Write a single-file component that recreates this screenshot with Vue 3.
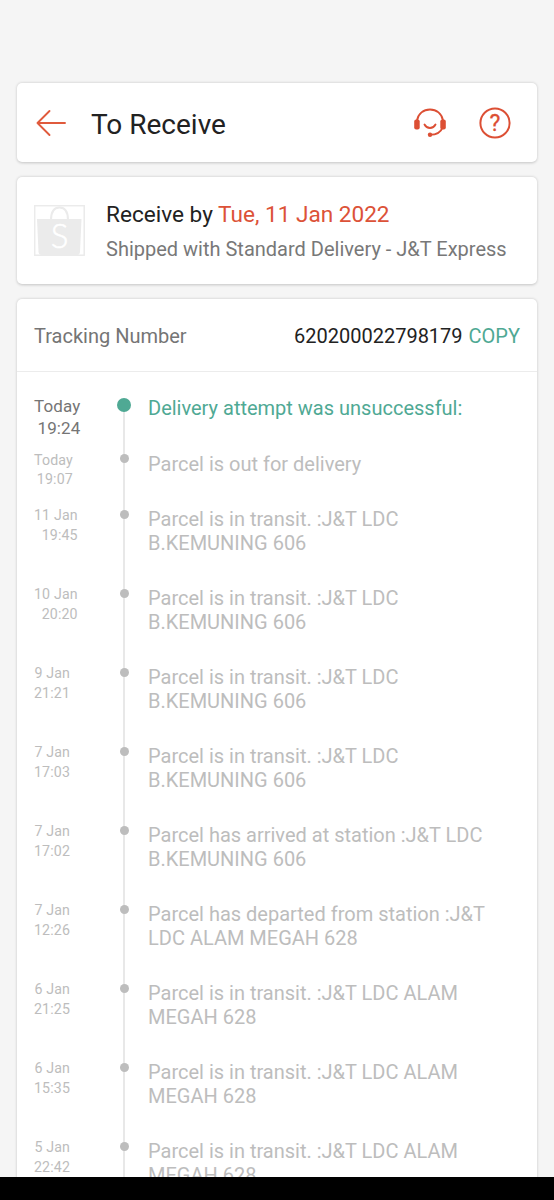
<script setup>
const events = [
  { day: 'Today', time: '19:24', lines: ['Delivery attempt was unsuccessful:'], current: true },
  { day: 'Today', time: '19:07', lines: ['Parcel is out for delivery'], short: true },
  { day: '11 Jan', time: '19:45', lines: ['Parcel is in transit. :J&T LDC', 'B.KEMUNING 606'] },
  { day: '10 Jan', time: '20:20', lines: ['Parcel is in transit. :J&T LDC', 'B.KEMUNING 606'] },
  { day: '9 Jan', time: '21:21', lines: ['Parcel is in transit. :J&T LDC', 'B.KEMUNING 606'] },
  { day: '7 Jan', time: '17:03', lines: ['Parcel is in transit. :J&T LDC', 'B.KEMUNING 606'] },
  { day: '7 Jan', time: '17:02', lines: ['Parcel has arrived at station :J&T LDC', 'B.KEMUNING 606'] },
  { day: '7 Jan', time: '12:26', lines: ['Parcel has departed from station :J&T', 'LDC ALAM MEGAH 628'] },
  { day: '6 Jan', time: '21:25', lines: ['Parcel is in transit. :J&T LDC ALAM', 'MEGAH 628'] },
  { day: '6 Jan', time: '15:35', lines: ['Parcel is in transit. :J&T LDC ALAM', 'MEGAH 628'] },
  { day: '5 Jan', time: '22:42', lines: ['Parcel is in transit. :J&T LDC ALAM', 'MEGAH 628'] },
]
</script>

<template>
  <div class="screen">
    <main class="content">
      <header class="card topbar">
        <svg class="back" width="32" height="28" viewBox="0 0 32 28">
          <path d="M14.500 2 2.500 14l12 12M2.500 14H30" />
        </svg>
        <h1 class="title">To Receive</h1>
        <svg class="headset" width="34" height="32" viewBox="0 0 34 32">
          <path d="M4 13.500C5.200 6.500 10.500 2.500 17 2.500S28.800 6.500 30 13.500M11.500 17.500c2.500 4.700 8.500 4.700 11 0M29.500 20.500c-1.500 4.500-6 7.200-12.500 7.300" />
          <rect x="1.200" y="12.500" width="5.500" height="10" rx="2" />
          <rect x="27.300" y="12.500" width="5.500" height="10" rx="2" />
          <circle cx="17" cy="27.700" r="2.200" />
        </svg>
        <svg class="help" width="34" height="34" viewBox="0 0 34 34">
          <circle cx="17" cy="17" r="14.600" />
          <text x="17" y="25" text-anchor="middle">?</text>
        </svg>
      </header>

      <section class="card delivery">
        <svg class="thumb" width="52" height="52" viewBox="0 0 52 52">
          <rect class="frame" x="0.700" y="0.700" width="49.500" height="49.500" />
          <path class="handle" d="M17 15C17 7 20 2.500 25.500 2.500s8.500 4.500 8.500 12.500" />
          <path class="bag" d="M3 14h44.500l-1.500 33q-.3 3-3 3h-35.500q-2.700 0-3-3z" />
          <text x="25.500" y="43" text-anchor="middle">S</text>
        </svg>
        <div>
          <p class="receive">Receive by <span>Tue, 11 Jan 2022</span></p>
          <p class="shipped">Shipped with Standard Delivery - J&amp;T Express</p>
        </div>
      </section>

      <section class="card tracking">
        <div class="number-row">
          <span class="label">Tracking Number</span>
          <span class="number">620200022798179</span>
          <span class="copy">COPY</span>
        </div>
        <ol class="events">
          <li
            v-for="(event, i) in events"
            :key="i"
            class="event"
            :class="{ current: event.current, short: event.short }"
          >
            <div class="when"><span>{{ event.day }}</span><span>{{ event.time }}</span></div>
            <div class="rail"><i class="dot"></i></div>
            <div class="what"><div v-for="line in event.lines" :key="line">{{ line }}</div></div>
          </li>
        </ol>
      </section>
    </main>
    <div class="navbar"></div>
  </div>
</template>

<style>
html, body { overflow: hidden; }
</style>

<style scoped>
.screen {
  width: 554px;
  height: 1200px;
  display: flex;
  flex-direction: column;
  overflow: hidden;
  background: #f5f5f5;
  font-family: Roboto, sans-serif;
  box-sizing: border-box;
}
.content {
  flex: 1;
  min-height: 0;
  overflow: hidden;
  padding: 83px 17px 0;
  display: flex;
  flex-direction: column;
  gap: 15px;
}
.card {
  flex: none;
  box-sizing: border-box;
  background: #fff;
  border-radius: 5px;
  box-shadow: 0 0.500px 3px rgba(0, 0, 0, 0.2);
}
.topbar { height: 79px; display: flex; align-items: center; padding: 0 25px 0 18px; }
.back { fill: none; stroke: #e05a3c; stroke-width: 1.9; stroke-linecap: round; stroke-linejoin: round; }
.title { margin: 5px auto 0 24px; font-size: 28px; font-weight: 400; line-height: 34px; color: #222; }
.headset { margin-right: 31px; fill: #dc4f34; }
.headset path { fill: none; stroke: #dc4f34; stroke-width: 1.9; stroke-linecap: round; }
.help circle { fill: none; stroke: #dc4f34; stroke-width: 2; }
.help text { font: 400 23px Roboto, sans-serif; fill: #dc4f34; stroke: #dc4f34; stroke-width: 0.3; }
.delivery { height: 107px; display: flex; padding: 24px 17px 0; gap: 20px; }
.thumb { margin-top: 4px; }
.frame { fill: none; stroke: #ebebeb; stroke-width: 1.5; }
.handle { fill: none; stroke: #ebebeb; stroke-width: 2; }
.bag { fill: #ebebeb; }
.thumb text { font: 300 33px Lato, sans-serif; fill: #fff; stroke: #fff; stroke-width: 0.5; }
p { margin: 0; white-space: nowrap; }
.receive { font-size: 22.600px; line-height: 28px; color: #222; }
.receive span { color: #dc5238; }
.shipped { margin-top: 7px; font-size: 20px; line-height: 26px; color: #787878; }
.tracking { height: 1000px; }
.number-row {
  height: 73px;
  box-sizing: border-box;
  display: flex;
  align-items: center;
  padding: 2px 17px 0;
  border-bottom: 1px solid #ececec;
  font-size: 20px;
}
.label { margin-right: auto; color: #757575; }
.number { margin-right: 6px; color: #222; }
.copy { color: #4fa994; }
.events { list-style: none; margin: 0; padding: 23px 0 0 17px; }
.event { height: 79px; display: grid; grid-template-columns: 84px 12px 1fr; color: #bdbdbd; }
.event.short { height: 55.500px; }
.event.current { height: 54.500px; }
.when { justify-self: start; display: flex; flex-direction: column; text-align: right; font-size: 14.200px; letter-spacing: 0.150px; line-height: 19.500px; padding-top: 1px; }
.current .when { font-size: 17px; line-height: 22px; color: #757575; padding-top: 0; }
.rail { display: flex; justify-content: center; background: linear-gradient(#e8e8e8, #e8e8e8) 5px 0 / 2px 100% no-repeat; }
.current .rail { background-position: 5px 10px; }
.dot { flex: none; width: 9px; height: 9px; margin-top: 4.500px; border-radius: 50%; background: #bdbdbd; }
.current .dot { width: 14px; height: 14px; margin: 3px -1px 0; background: #4fa994; }
.what { padding: 3px 0 0 18px; font-size: 20px; line-height: 23.600px; white-space: nowrap; }
.current .what { color: #4fa994; padding-top: 2px; }
.navbar { flex: none; height: 23px; background: #000; }
</style>
